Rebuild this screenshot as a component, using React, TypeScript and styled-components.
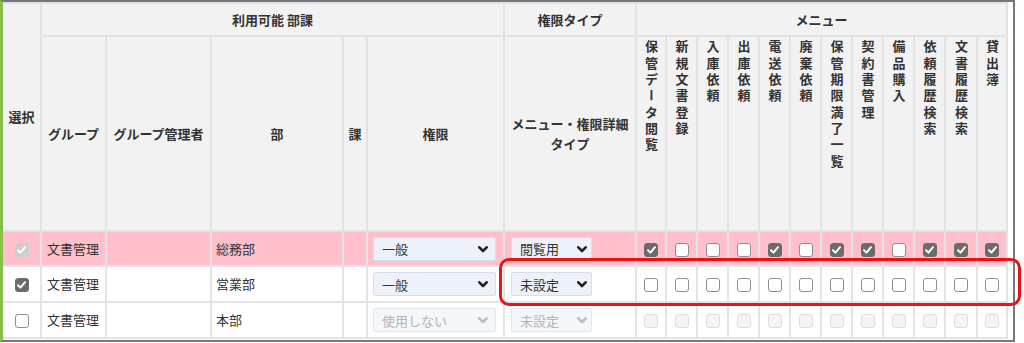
import React from "react";
import styled, { createGlobalStyle } from "styled-components";

const Global = createGlobalStyle`
  html, body { margin: 0; padding: 0; background: #ffffff; }
  body { font-family: "Noto Sans CJK JP", "Noto Sans", sans-serif; color: #333333; }
`;

const Frame = styled.div`
  position: relative;
  box-sizing: border-box;
  width: 1015px;
  height: 342px;
  border-top: 2px solid #737983;
  border-right: 2px solid #737983;
  border-bottom: 2px solid #737983;
  border-left: 3px solid #86bf4c;
  background: #ffffff;
`;

const Table = styled.table`
  table-layout: fixed;
  border-collapse: separate;
  border-spacing: 0;
  width: 1005px;
  border-top: 2px solid #e2e2e2;
  font-size: 13px;
  line-height: 20px;
`;

const HeadRow = styled.tr<{ $h: number }>`
  height: ${(p) => p.$h}px;
`;

const Th = styled.th<{ $top?: boolean }>`
  box-sizing: border-box;
  background: #f2f2f2;
  border-right: 2px solid #e2e2e2;
  border-bottom: 2px solid #e2e2e2;
  font-weight: 700;
  color: #333333;
  text-align: center;
  vertical-align: ${(p) => (p.$top ? "top" : "middle")};
  padding: ${(p) => (p.$top ? "3px 0 0 0" : "0 3px")};
  white-space: normal;
`;

const Vertical = styled.span`
  display: inline-block;
  writing-mode: vertical-rl;
  text-orientation: upright;
  letter-spacing: 3.3px;
  line-height: 18px;
`;

const BodyRow = styled.tr<{ $h: number; $pink?: boolean }>`
  height: ${(p) => p.$h}px;
  background: ${(p) => (p.$pink ? "#ffc0cb" : "#ffffff")};
`;

const Td = styled.td<{ $center?: boolean; $pl?: number }>`
  box-sizing: border-box;
  border-right: 2px solid #e4e4e4;
  border-bottom: 2px solid #e4e4e4;
  padding: 0 0 0 ${(p) => p.$pl ?? 5}px;
  text-align: ${(p) => (p.$center ? "center" : "left")};
  vertical-align: middle;
  color: #333333;
  white-space: nowrap;
  overflow: hidden;
`;

const SelectBox = styled.span<{ $w: number }>`
  position: relative;
  display: inline-block;
  width: ${(p) => p.$w}px;
  height: 24px;
  vertical-align: middle;
`;

const NativeSelect = styled.select`
  appearance: none;
  -webkit-appearance: none;
  box-sizing: border-box;
  width: 100%;
  height: 100%;
  margin: 0;
  padding: 0 0 0 8px;
  border: 1px solid #d5deea;
  border-radius: 2px;
  background: #edf2fa;
  font-family: "Noto Sans CJK JP", "Noto Sans", sans-serif;
  font-size: 13px;
  color: #333333;
  &:disabled {
    color: #b3b3b3;
    background: #f3f6fa;
    border-color: #e2e8f0;
    opacity: 1;
  }
`;

const Chevron = styled.svg<{ $right: number; $disabled?: boolean }>`
  position: absolute;
  right: ${(p) => p.$right}px;
  top: 9px;
  width: 10px;
  height: 7px;
  pointer-events: none;
  stroke: ${(p) => (p.$disabled ? "#bdbdbd" : "#222222")};
`;

type BoxKind = "checked" | "unchecked" | "disabledChecked" | "disabled";

const Box = styled.span<{ $kind: BoxKind }>`
  box-sizing: border-box;
  display: inline-flex;
  align-items: center;
  justify-content: center;
  width: 14px;
  height: 14px;
  border-radius: 3px;
  vertical-align: middle;
  border: 1.5px solid
    ${(p) =>
      p.$kind === "checked"
        ? "#6b6b6b"
        : p.$kind === "disabledChecked"
        ? "#cfcfcf"
        : p.$kind === "disabled"
        ? "#dedede"
        : "#8f8f8f"};
  background: ${(p) =>
    p.$kind === "checked"
      ? "#6b6b6b"
      : p.$kind === "disabledChecked"
      ? "#cfcfcf"
      : p.$kind === "disabled"
      ? "#f4f4f4"
      : "#ffffff"};
`;

const CheckCell = styled(Td)`
  padding: 0;
  text-align: center;
`;

const SelectCell = styled(Td)<{ $ml: number }>`
  padding: 0 0 0 ${(p) => p.$ml}px;
`;

const Callout = styled.div`
  position: absolute;
  left: 496px;
  top: 256px;
  width: 522px;
  height: 48px;
  box-sizing: border-box;
  border: 3px solid #ee1111;
  border-radius: 10px;
  pointer-events: none;
`;

const Checkbox: React.FC<{ kind: BoxKind }> = ({ kind }) => (
  <Box $kind={kind}>
    {(kind === "checked" || kind === "disabledChecked") && (
      <svg width="9" height="8" viewBox="0 0 9 8" fill="none">
        <polyline
          points="1,4.2 3.5,6.6 8,1.2"
          stroke="#ffffff"
          strokeWidth="2"
          strokeLinecap="round"
          strokeLinejoin="round"
        />
      </svg>
    )}
  </Box>
);

const Select: React.FC<{ w: number; value: string; right: number; disabled?: boolean }> = ({
  w,
  value,
  right,
  disabled,
}) => (
  <SelectBox $w={w}>
    <NativeSelect value={value} disabled={disabled} onChange={() => {}}>
      <option value={value}>{value}</option>
    </NativeSelect>
    <Chevron $right={right} $disabled={disabled} viewBox="0 0 10 7" fill="none">
      <polyline points="1.3,1.3 5,5 8.7,1.3" strokeWidth="2.6" strokeLinecap="round" strokeLinejoin="round" />
    </Chevron>
  </SelectBox>
);

const menuItems = [
  "保管データ閲覧",
  "新規文書登録",
  "入庫依頼",
  "出庫依頼",
  "電送依頼",
  "廃棄依頼",
  "保管期限満了一覧",
  "契約書管理",
  "備品購入",
  "依頼履歴検索",
  "文書履歴検索",
  "貸出簿",
];
const menuWidths = [30, 31, 31, 31, 31, 31, 31, 31, 31, 31, 32, 30];
const baseWidths = [39, 65, 105, 132, 24, 137, 132];

type Row = {
  pink?: boolean;
  h: number;
  select: BoxKind;
  dept: string;
  perm: string;
  type: string;
  disabled?: boolean;
  menu: BoxKind[];
};

const c: BoxKind = "checked";
const u: BoxKind = "unchecked";
const d: BoxKind = "disabled";

const rows: Row[] = [
  {
    pink: true,
    h: 35,
    select: "disabledChecked",
    dept: "総務部",
    perm: "一般",
    type: "閲覧用",
    menu: [c, u, u, u, c, u, c, c, u, c, c, c],
  },
  {
    h: 36,
    select: "checked",
    dept: "営業部",
    perm: "一般",
    type: "未設定",
    menu: Array(12).fill(u),
  },
  {
    h: 36,
    select: "unchecked",
    dept: "本部",
    perm: "使用しない",
    type: "未設定",
    disabled: true,
    menu: Array(12).fill(d),
  },
];

export default function App() {
  return (
    <>
      <Global />
      <Frame>
        <Table>
          <colgroup>
            {baseWidths.map((w, i) => (
              <col key={`b${i}`} style={{ width: w }} />
            ))}
            {menuWidths.map((w, i) => (
              <col key={`m${i}`} style={{ width: w }} />
            ))}
          </colgroup>
          <thead>
            <HeadRow $h={33}>
              <Th rowSpan={2}>選択</Th>
              <Th colSpan={5}>利用可能 部課</Th>
              <Th>権限タイプ</Th>
              <Th colSpan={12}>メニュー</Th>
            </HeadRow>
            <HeadRow $h={195}>
              <Th>グループ</Th>
              <Th>グループ管理者</Th>
              <Th>部</Th>
              <Th>課</Th>
              <Th>権限</Th>
              <Th>メニュー・権限詳細タイプ</Th>
              {menuItems.map((m) => (
                <Th key={m} $top>
                  <Vertical>{m}</Vertical>
                </Th>
              ))}
            </HeadRow>
          </thead>
          <tbody>
            {rows.map((r, i) => (
              <BodyRow key={i} $h={r.h} $pink={r.pink}>
                <CheckCell>
                  <Checkbox kind={r.select} />
                </CheckCell>
                <Td>文書管理</Td>
                <Td />
                <Td $pl={4}>{r.dept}</Td>
                <Td />
                <SelectCell $ml={5}>
                  <Select w={123} value={r.perm} right={8} disabled={r.disabled} />
                </SelectCell>
                <SelectCell $ml={6}>
                  <Select w={81} value={r.type} right={5} disabled={r.disabled} />
                </SelectCell>
                {r.menu.map((k, j) => (
                  <CheckCell key={j}>
                    <Checkbox kind={k} />
                  </CheckCell>
                ))}
              </BodyRow>
            ))}
          </tbody>
        </Table>
        <Callout />
      </Frame>
    </>
  );
}
